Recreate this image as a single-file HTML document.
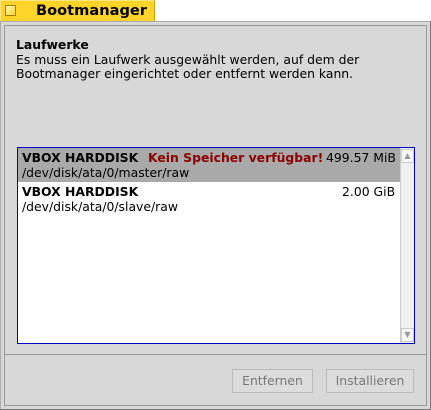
<!DOCTYPE html><html><head><style>
body{margin:0;width:431px;height:410px;background:#fff;position:relative;font-family:"DejaVu Sans","Liberation Sans",sans-serif;font-size:12.4px;overflow:hidden}
div{position:absolute;box-sizing:border-box}
.t{white-space:nowrap;color:#000}
</style></head><body>
<div style="left:0;top:0;width:155px;height:22px;background:#ffd42a;border:1px solid #c9a400;border-bottom:none;border-top-color:#ffe680;border-left-color:#ffe680"></div>
<div style="left:5px;top:5px;width:11px;height:11px;border:1px solid #a08000;background:linear-gradient(135deg,#fff6c0,#ffd42a)"></div>
<div class="t" style="left:36px;top:2px;font-weight:bold;font-size:14.6px">Bootmanager</div>
<div style="left:0;top:21px;width:431px;height:389px;background:#d8d8d8;border:1px solid #777;border-left-color:#aaa;border-top-color:#aaa"></div>
<div style="left:4px;top:25px;width:423px;height:381px;border:1px solid #999"></div>
<div class="t" style="left:16px;top:37px;font-weight:bold">Laufwerke</div>
<div class="t" style="left:16px;top:52px">Es muss ein Laufwerk ausgewählt werden, auf dem der</div>
<div class="t" style="left:16px;top:66px">Bootmanager eingerichtet oder entfernt werden kann.</div>
<div style="left:17px;top:147px;width:398px;height:197px;background:#fff;border:1px solid #0000c8"></div>
<div style="left:18px;top:148px;width:382px;height:34px;background:#a9a9a9"></div>
<div class="t" style="left:22px;top:150px;font-weight:bold">VBOX HARDDISK</div>
<div class="t" style="left:148px;top:150px;font-weight:bold;color:#8b0000">Kein Speicher verfügbar!</div>
<div class="t" style="left:326px;top:150px">499.57 MiB</div>
<div class="t" style="left:22px;top:165px">/dev/disk/ata/0/master/raw</div>
<div class="t" style="left:22px;top:184px;font-weight:bold">VBOX HARDDISK</div>
<div class="t" style="left:342px;top:184px">2.00 GiB</div>
<div class="t" style="left:22px;top:199px">/dev/disk/ata/0/slave/raw</div>
<div style="left:400px;top:148px;width:14px;height:195px;background:#f0f0f0;border-left:1px solid #ccc"></div>
<div style="left:401px;top:149px;width:13px;height:14px;border:1px solid #ccc;background:#f8f8f8;color:#999;font-size:8px;text-align:center;line-height:12px">▲</div>
<div style="left:401px;top:328px;width:13px;height:14px;border:1px solid #ccc;background:#f8f8f8;color:#999;font-size:8px;text-align:center;line-height:12px">▼</div>
<div style="left:5px;top:354px;width:421px;height:1px;background:#999"></div>
<div style="left:232px;top:369px;width:81px;height:24px;border:1px solid #bbb;background:#dcdcdc;color:#777;text-align:center;line-height:22px">Entfernen</div>
<div style="left:326px;top:369px;width:88px;height:24px;border:1px solid #bbb;background:#dcdcdc;color:#777;text-align:center;line-height:22px">Installieren</div>
</body></html>
